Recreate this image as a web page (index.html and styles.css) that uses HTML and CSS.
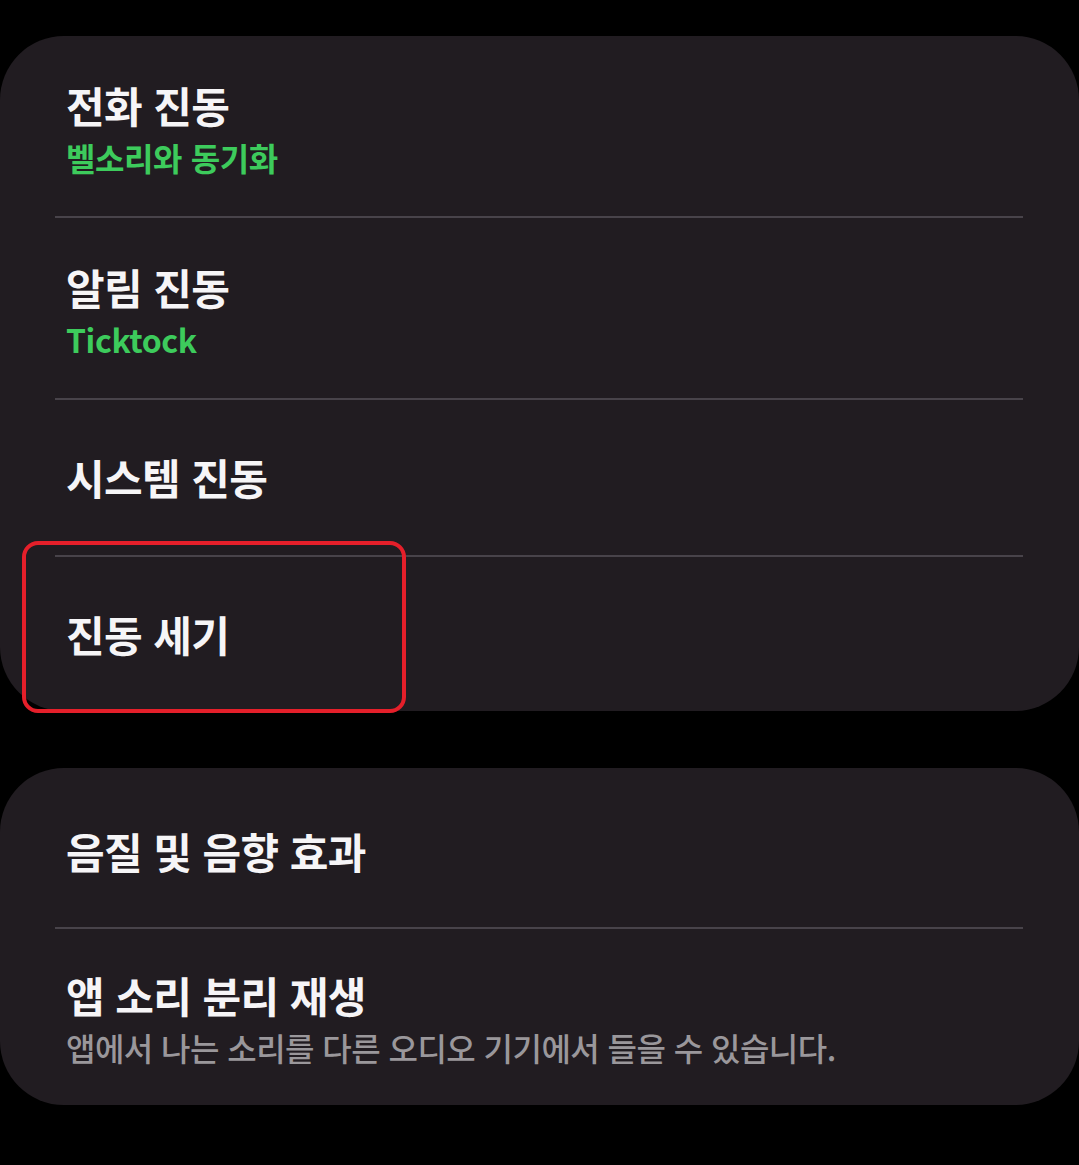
FILE: index.html
```html
<!DOCTYPE html>
<html lang="ko">
<head>
<meta charset="utf-8">
<link rel="stylesheet" href="styles.css">
</head>
<body>
<div class="screen">
  <section class="card card-vibration">
    <div class="row row-double">
      <div class="title">전화 진동</div>
      <div class="sub sub-green">벨소리와 동기화</div>
    </div>
    <div class="divider"></div>
    <div class="row row-double">
      <div class="title">알림 진동</div>
      <div class="sub sub-green">Ticktock</div>
    </div>
    <div class="divider"></div>
    <div class="row row-single">
      <div class="title">시스템 진동</div>
    </div>
    <div class="divider"></div>
    <div class="row row-single row-last">
      <div class="title">진동 세기</div>
      <div class="highlight"></div>
    </div>
  </section>

  <section class="card card-sound">
    <div class="row row-single row-first2">
      <div class="title">음질 및 음향 효과</div>
    </div>
    <div class="divider"></div>
    <div class="row row-double row-last2">
      <div class="title">앱 소리 분리 재생</div>
      <div class="sub sub-gray">앱에서 나는 소리를 다른 오디오 기기에서 들을 수 있습니다.</div>
    </div>
  </section>
</div>
</body>
</html>
```

FILE: styles.css
```css
html, body {
  margin: 0;
  padding: 0;
  background: #000;
}
body {
  width: 1079px;
  height: 1165px;
  overflow: hidden;
  font-family: "Noto Sans CJK KR", "Noto Sans", sans-serif;
}
.screen {
  display: flex;
  flex-direction: column;
  gap: 57px;
  padding-top: 36px;
}
.card {
  background: #211c21;
  border-radius: 64px;
  display: flex;
  flex-direction: column;
}
.card-vibration {
  height: 675px;
}
.card-sound {
  height: 337px;
}
.row {
  padding-left: 66px;
  display: flex;
  flex-direction: column;
  box-sizing: border-box;
}
.row-double {
  height: 180px;
  padding-top: 45px;
}
.row-single {
  height: 156px;
  justify-content: center;
}
.row-last {
  height: 154px;
  position: relative;
}
.row-first2 {
  height: 159px;
  padding-top: 6px;
}
.row-last2 {
  height: 176px;
  padding-top: 42px;
}
.title {
  color: #f6f5f7;
  font-size: 42px;
  font-weight: 700;
  line-height: 48px;
  letter-spacing: -0.6px;
}
.sub {
  font-size: 32px;
  line-height: 56px;
}
.sub-green {
  color: #3dcb5c;
  font-weight: 700;
  letter-spacing: -0.4px;
}
.sub-gray {
  color: #9a979b;
  font-weight: 500;
  letter-spacing: -0.55px;
}
.divider {
  height: 2px;
  margin: 0 56px 0 55px;
  background: #48434a;
  flex: none;
}
.highlight {
  position: absolute;
  left: 22px;
  top: -16px;
  width: 384px;
  height: 172px;
  box-sizing: border-box;
  border: 4px solid #e51f2a;
  border-radius: 16px;
  pointer-events: none;
}
```
